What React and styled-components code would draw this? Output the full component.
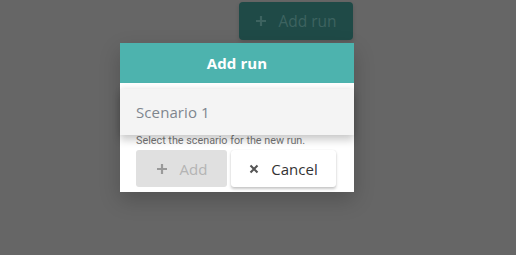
import React from "react";
import styled, { createGlobalStyle } from "styled-components";

const Global = createGlobalStyle`
  html, body { margin: 0; padding: 0; background: #666666; }
  body { font-family: "Open Sans", "Liberation Sans", sans-serif; }
`;

const Page = styled.div`
  width: 516px;
  height: 255px;
  display: flex;
  flex-direction: column;
  overflow: hidden;
`;

const TopRow = styled.div`
  display: flex;
  padding: 2px 0 0 239px;
`;

const TopButton = styled.div`
  width: 114px;
  height: 38px;
  border-radius: 4px;
  background: #1f4a47;
  box-shadow: 0 2px 4px rgba(0, 0, 0, 0.15);
  display: flex;
  align-items: center;
  justify-content: center;
  gap: 11px;
  color: #3d6360;
  font-size: 15.5px;
`;

const Dialog = styled.div`
  position: relative;
  margin: 3px 0 0 120px;
  width: 234px;
  background: #ffffff;
  display: flex;
  flex-direction: column;
  box-shadow: 0 8px 20px rgba(0, 0, 0, 0.2);
`;

const Header = styled.div`
  height: 40px;
  background: #4db3ae;
  color: #ffffff;
  display: flex;
  align-items: center;
  justify-content: center;
  font-weight: 700;
  font-size: 15px;
  letter-spacing: 0.1px;
`;

const Body = styled.div`
  padding: 6px 16px 5px 16px;
  display: flex;
  flex-direction: column;
`;

const Label = styled.div`
  font-family: "Roboto", sans-serif;
  font-size: 9px;
  color: #bbbbbb;
  height: 12px;
`;

const Field = styled.div`
  height: 32px;
`;

const Helper = styled.div`
  font-family: "Roboto", "Liberation Sans", sans-serif;
  font-size: 10.8px;
  color: #757575;
  line-height: 13px;
  margin-top: 1px;
`;

const Actions = styled.div`
  display: flex;
  gap: 4px;
  margin-top: 3px;
`;

const Button = styled.div`
  height: 37px;
  width: ${(p) => p.$w}px;
  border-radius: 3px;
  display: flex;
  align-items: center;
  justify-content: center;
  gap: 12px;
  font-size: 15px;
  background: ${(p) => (p.$disabled ? "#e0e0e0" : "#ffffff")};
  color: ${(p) => (p.$disabled ? "#b4b4b4" : "#333333")};
  box-shadow: ${(p) =>
    p.$disabled ? "none" : "0 2px 3px rgba(0,0,0,0.22), 0 0 1px rgba(0,0,0,0.12)"};
`;

const Menu = styled.div`
  position: absolute;
  left: 0;
  top: 46px;
  width: 234px;
  height: 46px;
  background: #f4f4f4;
  box-shadow: 0 5px 8px rgba(0, 0, 0, 0.2), 0 -2px 6px rgba(0, 0, 0, 0.06);
  display: flex;
  align-items: center;
  padding-left: 16px;
  box-sizing: border-box;
`;

const MenuItem = styled.div`
  font-size: 15px;
  color: #7f868e;
  letter-spacing: 0.1px;
`;

const Plus = ({ color }) => (
  <svg width="12" height="12" viewBox="0 0 12 12">
    <path d="M6 1v10M1 6h10" stroke={color} strokeWidth="2.2" />
  </svg>
);

const Cross = ({ color }) => (
  <svg width="10" height="10" viewBox="0 0 10 10">
    <path d="M1.5 1.5l7 7M8.5 1.5l-7 7" stroke={color} strokeWidth="2.1" />
  </svg>
);

export default function App() {
  return (
    <Page>
      <Global />
      <TopRow>
        <TopButton>
          <Plus color="#3d6360" />
          <span>Add run</span>
        </TopButton>
      </TopRow>
      <Dialog>
        <Header>Add run</Header>
        <Body>
          <Label>Scenario</Label>
          <Field />
          <Helper>Select the scenario for the new run.</Helper>
          <Actions>
            <Button $w={91} $disabled>
              <Plus color="#9a9a9a" />
              <span>Add</span>
            </Button>
            <Button $w={105}>
              <Cross color="#555555" />
              <span>Cancel</span>
            </Button>
          </Actions>
        </Body>
        <Menu>
          <MenuItem>Scenario 1</MenuItem>
        </Menu>
      </Dialog>
    </Page>
  );
}
